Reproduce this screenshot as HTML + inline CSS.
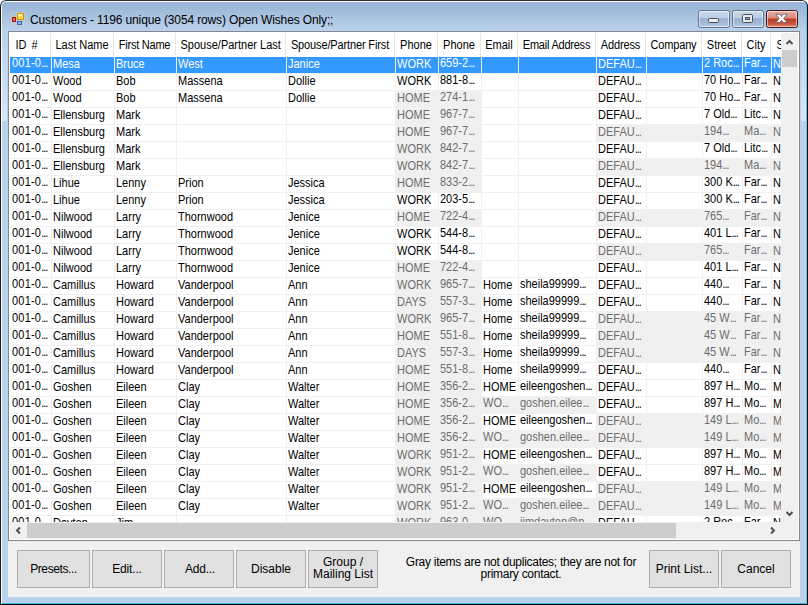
<!DOCTYPE html>
<html><head><meta charset="utf-8"><title>Customers</title>
<style>
html,body{margin:0;padding:0;}
body{width:808px;height:605px;overflow:hidden;background:#fff;font-family:"Liberation Sans",sans-serif;position:relative;}
#win{position:absolute;left:0;top:0;width:808px;height:605px;box-sizing:border-box;background:#b9d1ea;overflow:hidden;border-radius:6px 6px 0 0;}
#cap{position:absolute;left:0;top:0;width:808px;height:31px;background:linear-gradient(#97b3d3 0px,#9bb7d7 6px,#b9d1ea 30px);border-radius:6px 6px 0 0;}
.sg{position:absolute;top:26px;width:5px;height:95px;background:linear-gradient(rgba(255,255,255,0),rgba(255,255,255,.46));}
#edge{position:absolute;left:0;top:0;width:806px;height:603px;border:1px solid #000;border-radius:6px 6px 0 0;border-top-color:#2a2a2a;border-left-color:#1c1c1c;pointer-events:none;}
#edge2{position:absolute;left:1px;top:1px;width:804px;height:601px;border:1px solid transparent;border-top-color:#fff;border-left-color:#fff;border-right-color:#4fd0f7;border-bottom-color:#3fb6dc;border-radius:5px 5px 0 0;}
#title{position:absolute;left:30px;top:13px;font-size:12px;line-height:15px;color:#000;white-space:nowrap;letter-spacing:-0.135px;}
#ico{position:absolute;left:11px;top:12px;width:14px;height:14px;}
.tb{position:absolute;top:10px;height:16px;border:1px solid #64748c;border-radius:2.500px;box-shadow:inset 0 0 0 1px rgba(255,255,255,.55);}
#bmin{left:698px;width:30px;background:linear-gradient(#c9d9eb 0,#bccfe5 43%,#9ab3d1 46%,#a0b9d6 75%,#b4cbe4 100%);}
#bmax{left:732px;width:30px;background:linear-gradient(#c9d9eb 0,#bccfe5 43%,#9ab3d1 46%,#a0b9d6 75%,#b4cbe4 100%);}
#bcls{left:766px;width:30px;border-color:#45121c;background:linear-gradient(#e9b0a3 0,#d98978 45%,#b83c22 50%,#c9583c 80%,#dc8468 100%);}
.tb svg{position:absolute;left:0;top:0;}
#grid{position:absolute;left:8px;top:31px;width:790px;height:508px;border:1px solid #828790;background:#fff;}
#gi{position:absolute;left:1px;top:1px;width:788px;height:506px;background:#fff;overflow:hidden;}
#data{position:absolute;left:0;top:0;width:771px;height:489px;background:#f0f0f0;overflow:hidden;}
#hdr{position:absolute;left:0;top:0;width:771px;height:24px;background:#fff;}
.h{position:absolute;top:1px;height:23px;line-height:23px;font-size:12px;text-align:center;white-space:nowrap;color:#000;overflow:visible;transform:scaleX(0.917);transform-origin:50% 50%;}
.hl{text-align:left;text-indent:6px;transform-origin:0 50%;}
.hs{position:absolute;top:0;width:1px;height:23px;background:#e5e5e5;}
.c{position:absolute;height:16px;line-height:15px;font-size:11px;background:#fff;color:#000;white-space:nowrap;overflow:hidden;text-indent:1px;}
.c i{font-style:normal;letter-spacing:-1px;}
.c.u{line-height:13px;}
.c.z{text-indent:2px;letter-spacing:0.2px;}
.c u{text-decoration:none;display:inline-block;text-indent:0;transform:scaleY(1.12);transform-origin:0 11px;}
.c.u u{transform-origin:0 10px;}
.c.g{background:#f0f0f0;color:#6d6d6d;}
.c.s{background:#3399ff;color:#fff;}
#vs{position:absolute;left:771px;top:0;width:17px;height:489px;background:#f0f0f0;}
#vt{position:absolute;left:1px;top:17px;width:15px;height:17px;background:#cdcdcd;}
#hsb{position:absolute;left:0;top:489px;width:788px;height:17px;background:#f0f0f0;}
#ht{position:absolute;left:17px;top:1px;width:649px;height:15px;background:#cdcdcd;}
#pan{position:absolute;left:8px;top:541px;width:792px;height:56px;background:#f0f0f0;}
.b{position:absolute;top:9px;height:36px;border:1px solid #adadad;background:#e1e1e1;font-size:12px;color:#000;text-align:center;display:flex;align-items:center;justify-content:center;line-height:12px;}
#lbl{position:absolute;left:390px;top:15px;width:246px;font-size:12px;line-height:12px;letter-spacing:-0.28px;text-align:center;color:#000;}
</style></head><body>
<div id="win">
<div id="cap"></div><div class="sg" style="left:2px"></div><div class="sg" style="left:801px"></div>
<svg id="ico" viewBox="0 0 14 14"><g fill="none" stroke="#cfc9bd" stroke-opacity=".75" stroke-width="1"><rect x="0.5" y="0.5" width="13" height="13"/><path d="M5.500 0.500V13.500M0.500 4.500H5.500M5.500 8.500H13.500M0.500 10.500H5.500M3.500 10.500V13.500M11.500 8.500V13.500"/></g><rect x="6" y="1" width="7" height="7" fill="#c9980a"/><rect x="7" y="2" width="5" height="5" fill="#ffd54a"/><rect x="7" y="2" width="4" height="2" fill="#fff0b0"/><rect x="1" y="5" width="4" height="5" fill="#a5140a"/><rect x="2" y="6" width="2" height="3" fill="#ee6a5e"/><rect x="6" y="9" width="5" height="4" fill="#2f66cc"/><rect x="7" y="10" width="3" height="2" fill="#8ab6ff"/></svg>
<div id="title">Customers - 1196 unique (3054 rows) Open Wishes Only;;</div>
<div class="tb" id="bmin"><svg width="29" height="16" viewBox="0 0 29 16"><rect x="9.5" y="7.500" width="10" height="4" rx="1.200" fill="#ededed" stroke="#464d5e"/></svg></div>
<div class="tb" id="bmax"><svg width="29" height="16" viewBox="0 0 29 16"><rect x="9.500" y="3.500" width="10" height="8" rx="1.200" fill="#ededed" stroke="#464d5e"/><rect x="12.500" y="6.500" width="4" height="2" fill="#9cb3d0" stroke="#464d5e" stroke-width="1"/></svg></div>
<div class="tb" id="bcls"><svg width="30" height="16" viewBox="0 0 30 16"><path d="M8.900 3.200 L12.800 3.200 L14.500 5.400 L16.200 3.200 L20.100 3.200 L16.700 7.400 L20.100 11.500 L16.200 11.500 L14.500 9.400 L12.800 11.500 L8.900 11.500 L12.300 7.400 Z" fill="#fff" stroke="#48536a" stroke-width=".7" stroke-linejoin="round"/></svg></div>
<div id="grid"><div id="gi">
<div id="data">
<div id="hdr"><div class="h hl" style="left:0px;width:40px;word-spacing:2px;text-indent:6px">ID #</div><i class="hs" style="left:40px"></i><div class="h" style="left:41px;width:62px">Last Name</div><i class="hs" style="left:103px"></i><div class="h" style="left:104px;width:61px;letter-spacing:-0.25px">First Name</div><i class="hs" style="left:165px"></i><div class="h" style="left:166px;width:109px">Spouse/Partner Last</div><i class="hs" style="left:275px"></i><div class="h" style="left:276px;width:108px;letter-spacing:-0.15px">Spouse/Partner First</div><i class="hs" style="left:384px"></i><div class="h" style="left:385px;width:42px">Phone</div><i class="hs" style="left:427px"></i><div class="h" style="left:428px;width:42px">Phone</div><i class="hs" style="left:470px"></i><div class="h" style="left:471px;width:36px">Email</div><i class="hs" style="left:507px"></i><div class="h" style="left:508px;width:77px;letter-spacing:-0.25px">Email Address</div><i class="hs" style="left:585px"></i><div class="h" style="left:586px;width:49px;letter-spacing:-0.15px">Address</div><i class="hs" style="left:635px"></i><div class="h" style="left:636px;width:55px;letter-spacing:-0.2px">Company</div><i class="hs" style="left:691px"></i><div class="h" style="left:692px;width:39px">Street</div><i class="hs" style="left:731px"></i><div class="h" style="left:732px;width:28px">City</div><i class="hs" style="left:760px"></i><div class="h hl" style="left:761px;width:40px">S</div></div>
<div class="c s u z" style="left:0px;top:24px;width:41px"><u>001-0<i>...</i></u></div><div class="c s" style="left:42px;top:24px;width:62px"><u>Mesa</u></div><div class="c s" style="left:105px;top:24px;width:61px"><u>Bruce</u></div><div class="c s" style="left:167px;top:24px;width:109px"><u>West</u></div><div class="c s" style="left:277px;top:24px;width:108px"><u>Janice</u></div><div class="c s" style="left:386px;top:24px;width:42px"><u>WORK</u></div><div class="c s u" style="left:429px;top:24px;width:42px"><u>659-2<i>...</i></u></div><div class="c s" style="left:472px;top:24px;width:36px"></div><div class="c s u" style="left:509px;top:24px;width:77px"></div><div class="c s" style="left:587px;top:24px;width:49px"><u>DEFAU<i>...</i></u></div><div class="c s" style="left:637px;top:24px;width:55px"></div><div class="c s u" style="left:693px;top:24px;width:39px"><u>2 Roc<i>...</i></u></div><div class="c s u" style="left:733px;top:24px;width:28px"><u>Far<i>...</i></u></div><div class="c s" style="left:762px;top:24px;width:9px"><u>N</u></div><div class="c u z" style="left:0px;top:41px;width:41px"><u>001-0<i>...</i></u></div><div class="c" style="left:42px;top:41px;width:62px"><u>Wood</u></div><div class="c" style="left:105px;top:41px;width:61px"><u>Bob</u></div><div class="c" style="left:167px;top:41px;width:109px"><u>Massena</u></div><div class="c" style="left:277px;top:41px;width:108px"><u>Dollie</u></div><div class="c" style="left:386px;top:41px;width:42px"><u>WORK</u></div><div class="c u" style="left:429px;top:41px;width:42px"><u>881-8<i>...</i></u></div><div class="c" style="left:472px;top:41px;width:36px"></div><div class="c u" style="left:509px;top:41px;width:77px"></div><div class="c" style="left:587px;top:41px;width:49px"><u>DEFAU<i>...</i></u></div><div class="c" style="left:637px;top:41px;width:55px"></div><div class="c u" style="left:693px;top:41px;width:39px"><u>70 Ho<i>...</i></u></div><div class="c u" style="left:733px;top:41px;width:28px"><u>Far<i>...</i></u></div><div class="c" style="left:762px;top:41px;width:9px"><u>N</u></div><div class="c u z" style="left:0px;top:58px;width:41px"><u>001-0<i>...</i></u></div><div class="c" style="left:42px;top:58px;width:62px"><u>Wood</u></div><div class="c" style="left:105px;top:58px;width:61px"><u>Bob</u></div><div class="c" style="left:167px;top:58px;width:109px"><u>Massena</u></div><div class="c" style="left:277px;top:58px;width:108px"><u>Dollie</u></div><div class="c g" style="left:386px;top:58px;width:42px"><u>HOME</u></div><div class="c g u" style="left:429px;top:58px;width:42px"><u>274-1<i>...</i></u></div><div class="c" style="left:472px;top:58px;width:36px"></div><div class="c u" style="left:509px;top:58px;width:77px"></div><div class="c" style="left:587px;top:58px;width:49px"><u>DEFAU<i>...</i></u></div><div class="c" style="left:637px;top:58px;width:55px"></div><div class="c u" style="left:693px;top:58px;width:39px"><u>70 Ho<i>...</i></u></div><div class="c u" style="left:733px;top:58px;width:28px"><u>Far<i>...</i></u></div><div class="c" style="left:762px;top:58px;width:9px"><u>N</u></div><div class="c u z" style="left:0px;top:75px;width:41px"><u>001-0<i>...</i></u></div><div class="c" style="left:42px;top:75px;width:62px"><u>Ellensburg</u></div><div class="c" style="left:105px;top:75px;width:61px"><u>Mark</u></div><div class="c" style="left:167px;top:75px;width:109px"></div><div class="c" style="left:277px;top:75px;width:108px"></div><div class="c g" style="left:386px;top:75px;width:42px"><u>HOME</u></div><div class="c g u" style="left:429px;top:75px;width:42px"><u>967-7<i>...</i></u></div><div class="c" style="left:472px;top:75px;width:36px"></div><div class="c u" style="left:509px;top:75px;width:77px"></div><div class="c" style="left:587px;top:75px;width:49px"><u>DEFAU<i>...</i></u></div><div class="c" style="left:637px;top:75px;width:55px"></div><div class="c u" style="left:693px;top:75px;width:39px"><u>7 Old<i>...</i></u></div><div class="c u" style="left:733px;top:75px;width:28px"><u>Litc<i>...</i></u></div><div class="c" style="left:762px;top:75px;width:9px"><u>N</u></div><div class="c u z" style="left:0px;top:92px;width:41px"><u>001-0<i>...</i></u></div><div class="c" style="left:42px;top:92px;width:62px"><u>Ellensburg</u></div><div class="c" style="left:105px;top:92px;width:61px"><u>Mark</u></div><div class="c" style="left:167px;top:92px;width:109px"></div><div class="c" style="left:277px;top:92px;width:108px"></div><div class="c g" style="left:386px;top:92px;width:42px"><u>HOME</u></div><div class="c g u" style="left:429px;top:92px;width:42px"><u>967-7<i>...</i></u></div><div class="c" style="left:472px;top:92px;width:36px"></div><div class="c u" style="left:509px;top:92px;width:77px"></div><div class="c g" style="left:587px;top:92px;width:49px"><u>DEFAU<i>...</i></u></div><div class="c g" style="left:637px;top:92px;width:55px"></div><div class="c g u" style="left:693px;top:92px;width:39px"><u>194<i>...</i></u></div><div class="c g u" style="left:733px;top:92px;width:28px"><u>Ma<i>...</i></u></div><div class="c g" style="left:762px;top:92px;width:9px"><u>N</u></div><div class="c u z" style="left:0px;top:109px;width:41px"><u>001-0<i>...</i></u></div><div class="c" style="left:42px;top:109px;width:62px"><u>Ellensburg</u></div><div class="c" style="left:105px;top:109px;width:61px"><u>Mark</u></div><div class="c" style="left:167px;top:109px;width:109px"></div><div class="c" style="left:277px;top:109px;width:108px"></div><div class="c g" style="left:386px;top:109px;width:42px"><u>WORK</u></div><div class="c g u" style="left:429px;top:109px;width:42px"><u>842-7<i>...</i></u></div><div class="c" style="left:472px;top:109px;width:36px"></div><div class="c u" style="left:509px;top:109px;width:77px"></div><div class="c" style="left:587px;top:109px;width:49px"><u>DEFAU<i>...</i></u></div><div class="c" style="left:637px;top:109px;width:55px"></div><div class="c u" style="left:693px;top:109px;width:39px"><u>7 Old<i>...</i></u></div><div class="c u" style="left:733px;top:109px;width:28px"><u>Litc<i>...</i></u></div><div class="c" style="left:762px;top:109px;width:9px"><u>N</u></div><div class="c u z" style="left:0px;top:126px;width:41px"><u>001-0<i>...</i></u></div><div class="c" style="left:42px;top:126px;width:62px"><u>Ellensburg</u></div><div class="c" style="left:105px;top:126px;width:61px"><u>Mark</u></div><div class="c" style="left:167px;top:126px;width:109px"></div><div class="c" style="left:277px;top:126px;width:108px"></div><div class="c g" style="left:386px;top:126px;width:42px"><u>WORK</u></div><div class="c g u" style="left:429px;top:126px;width:42px"><u>842-7<i>...</i></u></div><div class="c" style="left:472px;top:126px;width:36px"></div><div class="c u" style="left:509px;top:126px;width:77px"></div><div class="c g" style="left:587px;top:126px;width:49px"><u>DEFAU<i>...</i></u></div><div class="c g" style="left:637px;top:126px;width:55px"></div><div class="c g u" style="left:693px;top:126px;width:39px"><u>194<i>...</i></u></div><div class="c g u" style="left:733px;top:126px;width:28px"><u>Ma<i>...</i></u></div><div class="c g" style="left:762px;top:126px;width:9px"><u>N</u></div><div class="c u z" style="left:0px;top:143px;width:41px"><u>001-0<i>...</i></u></div><div class="c" style="left:42px;top:143px;width:62px"><u>Lihue</u></div><div class="c" style="left:105px;top:143px;width:61px"><u>Lenny</u></div><div class="c" style="left:167px;top:143px;width:109px"><u>Prion</u></div><div class="c" style="left:277px;top:143px;width:108px"><u>Jessica</u></div><div class="c g" style="left:386px;top:143px;width:42px"><u>HOME</u></div><div class="c g u" style="left:429px;top:143px;width:42px"><u>833-2<i>...</i></u></div><div class="c" style="left:472px;top:143px;width:36px"></div><div class="c u" style="left:509px;top:143px;width:77px"></div><div class="c" style="left:587px;top:143px;width:49px"><u>DEFAU<i>...</i></u></div><div class="c" style="left:637px;top:143px;width:55px"></div><div class="c u" style="left:693px;top:143px;width:39px"><u>300 K<i>...</i></u></div><div class="c u" style="left:733px;top:143px;width:28px"><u>Far<i>...</i></u></div><div class="c" style="left:762px;top:143px;width:9px"><u>N</u></div><div class="c u z" style="left:0px;top:160px;width:41px"><u>001-0<i>...</i></u></div><div class="c" style="left:42px;top:160px;width:62px"><u>Lihue</u></div><div class="c" style="left:105px;top:160px;width:61px"><u>Lenny</u></div><div class="c" style="left:167px;top:160px;width:109px"><u>Prion</u></div><div class="c" style="left:277px;top:160px;width:108px"><u>Jessica</u></div><div class="c" style="left:386px;top:160px;width:42px"><u>WORK</u></div><div class="c u" style="left:429px;top:160px;width:42px"><u>203-5<i>...</i></u></div><div class="c" style="left:472px;top:160px;width:36px"></div><div class="c u" style="left:509px;top:160px;width:77px"></div><div class="c" style="left:587px;top:160px;width:49px"><u>DEFAU<i>...</i></u></div><div class="c" style="left:637px;top:160px;width:55px"></div><div class="c u" style="left:693px;top:160px;width:39px"><u>300 K<i>...</i></u></div><div class="c u" style="left:733px;top:160px;width:28px"><u>Far<i>...</i></u></div><div class="c" style="left:762px;top:160px;width:9px"><u>N</u></div><div class="c u z" style="left:0px;top:177px;width:41px"><u>001-0<i>...</i></u></div><div class="c" style="left:42px;top:177px;width:62px"><u>Nilwood</u></div><div class="c" style="left:105px;top:177px;width:61px"><u>Larry</u></div><div class="c" style="left:167px;top:177px;width:109px"><u>Thornwood</u></div><div class="c" style="left:277px;top:177px;width:108px"><u>Jenice</u></div><div class="c g" style="left:386px;top:177px;width:42px"><u>HOME</u></div><div class="c g u" style="left:429px;top:177px;width:42px"><u>722-4<i>...</i></u></div><div class="c" style="left:472px;top:177px;width:36px"></div><div class="c u" style="left:509px;top:177px;width:77px"></div><div class="c g" style="left:587px;top:177px;width:49px"><u>DEFAU<i>...</i></u></div><div class="c g" style="left:637px;top:177px;width:55px"></div><div class="c g u" style="left:693px;top:177px;width:39px"><u>765<i>...</i></u></div><div class="c g u" style="left:733px;top:177px;width:28px"><u>Far<i>...</i></u></div><div class="c g" style="left:762px;top:177px;width:9px"><u>N</u></div><div class="c u z" style="left:0px;top:194px;width:41px"><u>001-0<i>...</i></u></div><div class="c" style="left:42px;top:194px;width:62px"><u>Nilwood</u></div><div class="c" style="left:105px;top:194px;width:61px"><u>Larry</u></div><div class="c" style="left:167px;top:194px;width:109px"><u>Thornwood</u></div><div class="c" style="left:277px;top:194px;width:108px"><u>Jenice</u></div><div class="c" style="left:386px;top:194px;width:42px"><u>WORK</u></div><div class="c u" style="left:429px;top:194px;width:42px"><u>544-8<i>...</i></u></div><div class="c" style="left:472px;top:194px;width:36px"></div><div class="c u" style="left:509px;top:194px;width:77px"></div><div class="c" style="left:587px;top:194px;width:49px"><u>DEFAU<i>...</i></u></div><div class="c" style="left:637px;top:194px;width:55px"></div><div class="c u" style="left:693px;top:194px;width:39px"><u>401 L<i>...</i></u></div><div class="c u" style="left:733px;top:194px;width:28px"><u>Far<i>...</i></u></div><div class="c" style="left:762px;top:194px;width:9px"><u>N</u></div><div class="c u z" style="left:0px;top:211px;width:41px"><u>001-0<i>...</i></u></div><div class="c" style="left:42px;top:211px;width:62px"><u>Nilwood</u></div><div class="c" style="left:105px;top:211px;width:61px"><u>Larry</u></div><div class="c" style="left:167px;top:211px;width:109px"><u>Thornwood</u></div><div class="c" style="left:277px;top:211px;width:108px"><u>Jenice</u></div><div class="c" style="left:386px;top:211px;width:42px"><u>WORK</u></div><div class="c u" style="left:429px;top:211px;width:42px"><u>544-8<i>...</i></u></div><div class="c" style="left:472px;top:211px;width:36px"></div><div class="c u" style="left:509px;top:211px;width:77px"></div><div class="c g" style="left:587px;top:211px;width:49px"><u>DEFAU<i>...</i></u></div><div class="c g" style="left:637px;top:211px;width:55px"></div><div class="c g u" style="left:693px;top:211px;width:39px"><u>765<i>...</i></u></div><div class="c g u" style="left:733px;top:211px;width:28px"><u>Far<i>...</i></u></div><div class="c g" style="left:762px;top:211px;width:9px"><u>N</u></div><div class="c u z" style="left:0px;top:228px;width:41px"><u>001-0<i>...</i></u></div><div class="c" style="left:42px;top:228px;width:62px"><u>Nilwood</u></div><div class="c" style="left:105px;top:228px;width:61px"><u>Larry</u></div><div class="c" style="left:167px;top:228px;width:109px"><u>Thornwood</u></div><div class="c" style="left:277px;top:228px;width:108px"><u>Jenice</u></div><div class="c g" style="left:386px;top:228px;width:42px"><u>HOME</u></div><div class="c g u" style="left:429px;top:228px;width:42px"><u>722-4<i>...</i></u></div><div class="c" style="left:472px;top:228px;width:36px"></div><div class="c u" style="left:509px;top:228px;width:77px"></div><div class="c" style="left:587px;top:228px;width:49px"><u>DEFAU<i>...</i></u></div><div class="c" style="left:637px;top:228px;width:55px"></div><div class="c u" style="left:693px;top:228px;width:39px"><u>401 L<i>...</i></u></div><div class="c u" style="left:733px;top:228px;width:28px"><u>Far<i>...</i></u></div><div class="c" style="left:762px;top:228px;width:9px"><u>N</u></div><div class="c u z" style="left:0px;top:245px;width:41px"><u>001-0<i>...</i></u></div><div class="c" style="left:42px;top:245px;width:62px"><u>Camillus</u></div><div class="c" style="left:105px;top:245px;width:61px"><u>Howard</u></div><div class="c" style="left:167px;top:245px;width:109px"><u>Vanderpool</u></div><div class="c" style="left:277px;top:245px;width:108px"><u>Ann</u></div><div class="c g" style="left:386px;top:245px;width:42px"><u>WORK</u></div><div class="c g u" style="left:429px;top:245px;width:42px"><u>965-7<i>...</i></u></div><div class="c" style="left:472px;top:245px;width:36px"><u>Home</u></div><div class="c u" style="left:509px;top:245px;width:77px"><u>sheila99999<i>...</i></u></div><div class="c" style="left:587px;top:245px;width:49px"><u>DEFAU<i>...</i></u></div><div class="c" style="left:637px;top:245px;width:55px"></div><div class="c u" style="left:693px;top:245px;width:39px"><u>440<i>...</i></u></div><div class="c u" style="left:733px;top:245px;width:28px"><u>Far<i>...</i></u></div><div class="c" style="left:762px;top:245px;width:9px"><u>N</u></div><div class="c u z" style="left:0px;top:262px;width:41px"><u>001-0<i>...</i></u></div><div class="c" style="left:42px;top:262px;width:62px"><u>Camillus</u></div><div class="c" style="left:105px;top:262px;width:61px"><u>Howard</u></div><div class="c" style="left:167px;top:262px;width:109px"><u>Vanderpool</u></div><div class="c" style="left:277px;top:262px;width:108px"><u>Ann</u></div><div class="c g" style="left:386px;top:262px;width:42px"><u>DAYS</u></div><div class="c g u" style="left:429px;top:262px;width:42px"><u>557-3<i>...</i></u></div><div class="c" style="left:472px;top:262px;width:36px"><u>Home</u></div><div class="c u" style="left:509px;top:262px;width:77px"><u>sheila99999<i>...</i></u></div><div class="c" style="left:587px;top:262px;width:49px"><u>DEFAU<i>...</i></u></div><div class="c" style="left:637px;top:262px;width:55px"></div><div class="c u" style="left:693px;top:262px;width:39px"><u>440<i>...</i></u></div><div class="c u" style="left:733px;top:262px;width:28px"><u>Far<i>...</i></u></div><div class="c" style="left:762px;top:262px;width:9px"><u>N</u></div><div class="c u z" style="left:0px;top:279px;width:41px"><u>001-0<i>...</i></u></div><div class="c" style="left:42px;top:279px;width:62px"><u>Camillus</u></div><div class="c" style="left:105px;top:279px;width:61px"><u>Howard</u></div><div class="c" style="left:167px;top:279px;width:109px"><u>Vanderpool</u></div><div class="c" style="left:277px;top:279px;width:108px"><u>Ann</u></div><div class="c g" style="left:386px;top:279px;width:42px"><u>WORK</u></div><div class="c g u" style="left:429px;top:279px;width:42px"><u>965-7<i>...</i></u></div><div class="c" style="left:472px;top:279px;width:36px"><u>Home</u></div><div class="c u" style="left:509px;top:279px;width:77px"><u>sheila99999<i>...</i></u></div><div class="c g" style="left:587px;top:279px;width:49px"><u>DEFAU<i>...</i></u></div><div class="c g" style="left:637px;top:279px;width:55px"></div><div class="c g u" style="left:693px;top:279px;width:39px"><u>45 W<i>...</i></u></div><div class="c g u" style="left:733px;top:279px;width:28px"><u>Far<i>...</i></u></div><div class="c g" style="left:762px;top:279px;width:9px"><u>N</u></div><div class="c u z" style="left:0px;top:296px;width:41px"><u>001-0<i>...</i></u></div><div class="c" style="left:42px;top:296px;width:62px"><u>Camillus</u></div><div class="c" style="left:105px;top:296px;width:61px"><u>Howard</u></div><div class="c" style="left:167px;top:296px;width:109px"><u>Vanderpool</u></div><div class="c" style="left:277px;top:296px;width:108px"><u>Ann</u></div><div class="c g" style="left:386px;top:296px;width:42px"><u>HOME</u></div><div class="c g u" style="left:429px;top:296px;width:42px"><u>551-8<i>...</i></u></div><div class="c" style="left:472px;top:296px;width:36px"><u>Home</u></div><div class="c u" style="left:509px;top:296px;width:77px"><u>sheila99999<i>...</i></u></div><div class="c g" style="left:587px;top:296px;width:49px"><u>DEFAU<i>...</i></u></div><div class="c g" style="left:637px;top:296px;width:55px"></div><div class="c g u" style="left:693px;top:296px;width:39px"><u>45 W<i>...</i></u></div><div class="c g u" style="left:733px;top:296px;width:28px"><u>Far<i>...</i></u></div><div class="c g" style="left:762px;top:296px;width:9px"><u>N</u></div><div class="c u z" style="left:0px;top:313px;width:41px"><u>001-0<i>...</i></u></div><div class="c" style="left:42px;top:313px;width:62px"><u>Camillus</u></div><div class="c" style="left:105px;top:313px;width:61px"><u>Howard</u></div><div class="c" style="left:167px;top:313px;width:109px"><u>Vanderpool</u></div><div class="c" style="left:277px;top:313px;width:108px"><u>Ann</u></div><div class="c g" style="left:386px;top:313px;width:42px"><u>DAYS</u></div><div class="c g u" style="left:429px;top:313px;width:42px"><u>557-3<i>...</i></u></div><div class="c" style="left:472px;top:313px;width:36px"><u>Home</u></div><div class="c u" style="left:509px;top:313px;width:77px"><u>sheila99999<i>...</i></u></div><div class="c g" style="left:587px;top:313px;width:49px"><u>DEFAU<i>...</i></u></div><div class="c g" style="left:637px;top:313px;width:55px"></div><div class="c g u" style="left:693px;top:313px;width:39px"><u>45 W<i>...</i></u></div><div class="c g u" style="left:733px;top:313px;width:28px"><u>Far<i>...</i></u></div><div class="c g" style="left:762px;top:313px;width:9px"><u>N</u></div><div class="c u z" style="left:0px;top:330px;width:41px"><u>001-0<i>...</i></u></div><div class="c" style="left:42px;top:330px;width:62px"><u>Camillus</u></div><div class="c" style="left:105px;top:330px;width:61px"><u>Howard</u></div><div class="c" style="left:167px;top:330px;width:109px"><u>Vanderpool</u></div><div class="c" style="left:277px;top:330px;width:108px"><u>Ann</u></div><div class="c g" style="left:386px;top:330px;width:42px"><u>HOME</u></div><div class="c g u" style="left:429px;top:330px;width:42px"><u>551-8<i>...</i></u></div><div class="c" style="left:472px;top:330px;width:36px"><u>Home</u></div><div class="c u" style="left:509px;top:330px;width:77px"><u>sheila99999<i>...</i></u></div><div class="c" style="left:587px;top:330px;width:49px"><u>DEFAU<i>...</i></u></div><div class="c" style="left:637px;top:330px;width:55px"></div><div class="c u" style="left:693px;top:330px;width:39px"><u>440<i>...</i></u></div><div class="c u" style="left:733px;top:330px;width:28px"><u>Far<i>...</i></u></div><div class="c" style="left:762px;top:330px;width:9px"><u>N</u></div><div class="c u z" style="left:0px;top:347px;width:41px"><u>001-0<i>...</i></u></div><div class="c" style="left:42px;top:347px;width:62px"><u>Goshen</u></div><div class="c" style="left:105px;top:347px;width:61px"><u>Eileen</u></div><div class="c" style="left:167px;top:347px;width:109px"><u>Clay</u></div><div class="c" style="left:277px;top:347px;width:108px"><u>Walter</u></div><div class="c g" style="left:386px;top:347px;width:42px"><u>HOME</u></div><div class="c g u" style="left:429px;top:347px;width:42px"><u>356-2<i>...</i></u></div><div class="c" style="left:472px;top:347px;width:36px"><u>HOME</u></div><div class="c u" style="left:509px;top:347px;width:77px"><u>eileengoshen<i>...</i></u></div><div class="c" style="left:587px;top:347px;width:49px"><u>DEFAU<i>...</i></u></div><div class="c" style="left:637px;top:347px;width:55px"></div><div class="c u" style="left:693px;top:347px;width:39px"><u>897 H<i>...</i></u></div><div class="c u" style="left:733px;top:347px;width:28px"><u>Mo<i>...</i></u></div><div class="c" style="left:762px;top:347px;width:9px"><u>M</u></div><div class="c u z" style="left:0px;top:364px;width:41px"><u>001-0<i>...</i></u></div><div class="c" style="left:42px;top:364px;width:62px"><u>Goshen</u></div><div class="c" style="left:105px;top:364px;width:61px"><u>Eileen</u></div><div class="c" style="left:167px;top:364px;width:109px"><u>Clay</u></div><div class="c" style="left:277px;top:364px;width:108px"><u>Walter</u></div><div class="c g" style="left:386px;top:364px;width:42px"><u>HOME</u></div><div class="c g u" style="left:429px;top:364px;width:42px"><u>356-2<i>...</i></u></div><div class="c g u" style="left:472px;top:364px;width:36px"><u>WO<i>...</i></u></div><div class="c g u" style="left:509px;top:364px;width:77px"><u>goshen.eilee<i>...</i></u></div><div class="c" style="left:587px;top:364px;width:49px"><u>DEFAU<i>...</i></u></div><div class="c" style="left:637px;top:364px;width:55px"></div><div class="c u" style="left:693px;top:364px;width:39px"><u>897 H<i>...</i></u></div><div class="c u" style="left:733px;top:364px;width:28px"><u>Mo<i>...</i></u></div><div class="c" style="left:762px;top:364px;width:9px"><u>M</u></div><div class="c u z" style="left:0px;top:381px;width:41px"><u>001-0<i>...</i></u></div><div class="c" style="left:42px;top:381px;width:62px"><u>Goshen</u></div><div class="c" style="left:105px;top:381px;width:61px"><u>Eileen</u></div><div class="c" style="left:167px;top:381px;width:109px"><u>Clay</u></div><div class="c" style="left:277px;top:381px;width:108px"><u>Walter</u></div><div class="c g" style="left:386px;top:381px;width:42px"><u>HOME</u></div><div class="c g u" style="left:429px;top:381px;width:42px"><u>356-2<i>...</i></u></div><div class="c" style="left:472px;top:381px;width:36px"><u>HOME</u></div><div class="c u" style="left:509px;top:381px;width:77px"><u>eileengoshen<i>...</i></u></div><div class="c g" style="left:587px;top:381px;width:49px"><u>DEFAU<i>...</i></u></div><div class="c g" style="left:637px;top:381px;width:55px"></div><div class="c g u" style="left:693px;top:381px;width:39px"><u>149 L<i>...</i></u></div><div class="c g u" style="left:733px;top:381px;width:28px"><u>Mo<i>...</i></u></div><div class="c g" style="left:762px;top:381px;width:9px"><u>M</u></div><div class="c u z" style="left:0px;top:398px;width:41px"><u>001-0<i>...</i></u></div><div class="c" style="left:42px;top:398px;width:62px"><u>Goshen</u></div><div class="c" style="left:105px;top:398px;width:61px"><u>Eileen</u></div><div class="c" style="left:167px;top:398px;width:109px"><u>Clay</u></div><div class="c" style="left:277px;top:398px;width:108px"><u>Walter</u></div><div class="c g" style="left:386px;top:398px;width:42px"><u>HOME</u></div><div class="c g u" style="left:429px;top:398px;width:42px"><u>356-2<i>...</i></u></div><div class="c g u" style="left:472px;top:398px;width:36px"><u>WO<i>...</i></u></div><div class="c g u" style="left:509px;top:398px;width:77px"><u>goshen.eilee<i>...</i></u></div><div class="c g" style="left:587px;top:398px;width:49px"><u>DEFAU<i>...</i></u></div><div class="c g" style="left:637px;top:398px;width:55px"></div><div class="c g u" style="left:693px;top:398px;width:39px"><u>149 L<i>...</i></u></div><div class="c g u" style="left:733px;top:398px;width:28px"><u>Mo<i>...</i></u></div><div class="c g" style="left:762px;top:398px;width:9px"><u>M</u></div><div class="c u z" style="left:0px;top:415px;width:41px"><u>001-0<i>...</i></u></div><div class="c" style="left:42px;top:415px;width:62px"><u>Goshen</u></div><div class="c" style="left:105px;top:415px;width:61px"><u>Eileen</u></div><div class="c" style="left:167px;top:415px;width:109px"><u>Clay</u></div><div class="c" style="left:277px;top:415px;width:108px"><u>Walter</u></div><div class="c g" style="left:386px;top:415px;width:42px"><u>WORK</u></div><div class="c g u" style="left:429px;top:415px;width:42px"><u>951-2<i>...</i></u></div><div class="c" style="left:472px;top:415px;width:36px"><u>HOME</u></div><div class="c u" style="left:509px;top:415px;width:77px"><u>eileengoshen<i>...</i></u></div><div class="c" style="left:587px;top:415px;width:49px"><u>DEFAU<i>...</i></u></div><div class="c" style="left:637px;top:415px;width:55px"></div><div class="c u" style="left:693px;top:415px;width:39px"><u>897 H<i>...</i></u></div><div class="c u" style="left:733px;top:415px;width:28px"><u>Mo<i>...</i></u></div><div class="c" style="left:762px;top:415px;width:9px"><u>M</u></div><div class="c u z" style="left:0px;top:432px;width:41px"><u>001-0<i>...</i></u></div><div class="c" style="left:42px;top:432px;width:62px"><u>Goshen</u></div><div class="c" style="left:105px;top:432px;width:61px"><u>Eileen</u></div><div class="c" style="left:167px;top:432px;width:109px"><u>Clay</u></div><div class="c" style="left:277px;top:432px;width:108px"><u>Walter</u></div><div class="c g" style="left:386px;top:432px;width:42px"><u>WORK</u></div><div class="c g u" style="left:429px;top:432px;width:42px"><u>951-2<i>...</i></u></div><div class="c g u" style="left:472px;top:432px;width:36px"><u>WO<i>...</i></u></div><div class="c g u" style="left:509px;top:432px;width:77px"><u>goshen.eilee<i>...</i></u></div><div class="c" style="left:587px;top:432px;width:49px"><u>DEFAU<i>...</i></u></div><div class="c" style="left:637px;top:432px;width:55px"></div><div class="c u" style="left:693px;top:432px;width:39px"><u>897 H<i>...</i></u></div><div class="c u" style="left:733px;top:432px;width:28px"><u>Mo<i>...</i></u></div><div class="c" style="left:762px;top:432px;width:9px"><u>M</u></div><div class="c u z" style="left:0px;top:449px;width:41px"><u>001-0<i>...</i></u></div><div class="c" style="left:42px;top:449px;width:62px"><u>Goshen</u></div><div class="c" style="left:105px;top:449px;width:61px"><u>Eileen</u></div><div class="c" style="left:167px;top:449px;width:109px"><u>Clay</u></div><div class="c" style="left:277px;top:449px;width:108px"><u>Walter</u></div><div class="c g" style="left:386px;top:449px;width:42px"><u>WORK</u></div><div class="c g u" style="left:429px;top:449px;width:42px"><u>951-2<i>...</i></u></div><div class="c" style="left:472px;top:449px;width:36px"><u>HOME</u></div><div class="c u" style="left:509px;top:449px;width:77px"><u>eileengoshen<i>...</i></u></div><div class="c g" style="left:587px;top:449px;width:49px"><u>DEFAU<i>...</i></u></div><div class="c g" style="left:637px;top:449px;width:55px"></div><div class="c g u" style="left:693px;top:449px;width:39px"><u>149 L<i>...</i></u></div><div class="c g u" style="left:733px;top:449px;width:28px"><u>Mo<i>...</i></u></div><div class="c g" style="left:762px;top:449px;width:9px"><u>M</u></div><div class="c u z" style="left:0px;top:466px;width:41px"><u>001-0<i>...</i></u></div><div class="c" style="left:42px;top:466px;width:62px"><u>Goshen</u></div><div class="c" style="left:105px;top:466px;width:61px"><u>Eileen</u></div><div class="c" style="left:167px;top:466px;width:109px"><u>Clay</u></div><div class="c" style="left:277px;top:466px;width:108px"><u>Walter</u></div><div class="c g" style="left:386px;top:466px;width:42px"><u>WORK</u></div><div class="c g u" style="left:429px;top:466px;width:42px"><u>951-2<i>...</i></u></div><div class="c g u" style="left:472px;top:466px;width:36px"><u>WO<i>...</i></u></div><div class="c g u" style="left:509px;top:466px;width:77px"><u>goshen.eilee<i>...</i></u></div><div class="c g" style="left:587px;top:466px;width:49px"><u>DEFAU<i>...</i></u></div><div class="c g" style="left:637px;top:466px;width:55px"></div><div class="c g u" style="left:693px;top:466px;width:39px"><u>149 L<i>...</i></u></div><div class="c g u" style="left:733px;top:466px;width:28px"><u>Mo<i>...</i></u></div><div class="c g" style="left:762px;top:466px;width:9px"><u>M</u></div><div class="c u z" style="left:0px;top:483px;width:41px"><u>001-0<i>...</i></u></div><div class="c" style="left:42px;top:483px;width:62px"><u>Dayton</u></div><div class="c" style="left:105px;top:483px;width:61px"><u>Jim</u></div><div class="c" style="left:167px;top:483px;width:109px"></div><div class="c" style="left:277px;top:483px;width:108px"></div><div class="c g" style="left:386px;top:483px;width:42px"><u>WORK</u></div><div class="c g u" style="left:429px;top:483px;width:42px"><u>963-0<i>...</i></u></div><div class="c g u" style="left:472px;top:483px;width:36px"><u>WO<i>...</i></u></div><div class="c g u" style="left:509px;top:483px;width:77px"><u>jimdayton@p<i>...</i></u></div><div class="c" style="left:587px;top:483px;width:49px"><u>DEFAU<i>...</i></u></div><div class="c" style="left:637px;top:483px;width:55px"></div><div class="c u" style="left:693px;top:483px;width:39px"><u>2 Roc<i>...</i></u></div><div class="c u" style="left:733px;top:483px;width:28px"><u>Far<i>...</i></u></div><div class="c" style="left:762px;top:483px;width:9px"><u>N</u></div>
</div>
<div id="vs"><svg width="17" height="17" style="position:absolute;left:0;top:0"><path d="M5.500 11 L8.500 8 L11.500 11" fill="none" stroke="#505050" stroke-width="2"/></svg><div id="vt"></div><svg width="17" height="17" style="position:absolute;left:0;top:472px"><path d="M5.500 7 L8.500 10 L11.500 7" fill="none" stroke="#505050" stroke-width="2"/></svg></div>
<div id="hsb"><svg width="17" height="17" style="position:absolute;left:0;top:0"><path d="M10 5.500 L7 8.500 L10 11.500" fill="none" stroke="#505050" stroke-width="2"/></svg><div id="ht"></div><svg width="17" height="17" style="position:absolute;left:754px;top:0"><path d="M7 5.500 L10 8.500 L7 11.500" fill="none" stroke="#505050" stroke-width="2"/></svg></div>
</div></div>
<div id="pan">
<div class="b" style="left:9px;width:71px;letter-spacing:-0.4px">Presets...</div>
<div class="b" style="left:84px;width:68px;letter-spacing:-0.15px">Edit...</div>
<div class="b" style="left:156px;width:68px;letter-spacing:-0.25px;text-indent:2px">Add...</div>
<div class="b" style="left:228px;width:68px">Disable</div>
<div class="b" style="left:300px;width:68px;height:34px;padding-bottom:2px">Group /<br>Mailing List</div>
<div id="lbl">Gray items are not duplicates; they are not for primary contact.</div>
<div class="b" style="left:641px;width:68px">Print List...</div>
<div class="b" style="left:713px;width:68px">Cancel</div>
</div>
<div id="edge2"></div>
<div id="edge"></div>
</div>
</body></html>
